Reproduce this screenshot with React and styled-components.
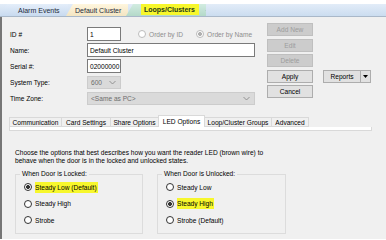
import React from "react"
import styled, { createGlobalStyle } from "styled-components"

const GlobalStyle = createGlobalStyle`
  html, body {
    margin: 0;
    padding: 0;
    background: #fff;
  }
  body {
    font-family: "Liberation Sans", Arial, sans-serif;
    font-size: 6.6px;
    color: #000;
  }
  #root {
    width: 386px;
    height: 240px;
    overflow: hidden;
  }
`

const docTabs = [
  { title: "Alarm Events", width: 68, pad: 18, bg: "linear-gradient(#e4eefa, #c8daef)" },
  { title: "Default Cluster", width: 62, pad: 9, bg: "linear-gradient(#fff6de, #f3e5c2)" },
  { title: "Loops/Clusters", width: 80, pad: 15, bg: "linear-gradient(#d2ece1, #b4d9c9)", active: true },
]

const pageTabs = [
  { title: "Communication", width: 53 },
  { title: "Card Settings", width: 50 },
  { title: "Share Options", width: 49 },
  { title: "LED Options", width: 47, active: true },
  { title: "Loop/Cluster Groups", width: 68 },
  { title: "Advanced", width: 38 },
]

const Chevron = () => (
  <svg width="7" height="5" viewBox="0 0 7 5">
    <polyline points="0.5,1 3.5,4 6.5,1" fill="none" stroke="#8a8a8a" strokeWidth="0.9" />
  </svg>
)

const Radio = ({ checked, disabled, children, mark }) => (
  <RadioRow disabled={disabled}>
    <RadioDot checked={checked} disabled={disabled} />
    {mark ? <Marker>{children}</Marker> : <span>{children}</span>}
  </RadioRow>
)

const App = () => {
  return (
    <>
      <GlobalStyle />
      <TabStrip>
        {docTabs.map((t, i) => (
          <DocTab key={i} w={t.width} pad={t.pad} bg={t.bg} active={t.active}>
            {t.active ? <TabMarker>{t.title}</TabMarker> : t.title}
            {t.active && (
              <CloseX width="7" height="7" viewBox="0 0 7 7">
                <path d="M1 1 L6 6 M6 1 L1 6" stroke="#8fa3ba" strokeWidth="1.2" />
              </CloseX>
            )}
          </DocTab>
        ))}
      </TabStrip>
      <Panel>
        <FormArea>
          <Fields>
            <Label>ID #</Label>
            <Inline>
              <TextBox w={34}>1</TextBox>
              <Options>
                <Radio disabled>Order by ID</Radio>
                <Radio disabled checked>Order by Name</Radio>
              </Options>
            </Inline>
            <Label>Name:</Label>
            <TextBox w={168}>Default Cluster</TextBox>
            <Label>Serial #:</Label>
            <TextBox w={34}>02000000</TextBox>
            <Label>System Type:</Label>
            <Combo w={34}>
              <span>600</span>
              <Chevron />
            </Combo>
            <Label>Time Zone:</Label>
            <Combo w={168}>
              <span>&lt;Same as PC&gt;</span>
              <Chevron />
            </Combo>
          </Fields>
          <Actions>
            <ActionButton disabled>Add New</ActionButton>
            <ActionButton disabled>Edit</ActionButton>
            <ActionButton disabled>Delete</ActionButton>
            <ActionButton>Apply</ActionButton>
            <SplitButton>
              <SplitMain>Reports</SplitMain>
              <SplitArrow>
                <svg width="5" height="3" viewBox="0 0 5 3">
                  <polygon points="0,0 5,0 2.5,3" fill="#000" />
                </svg>
              </SplitArrow>
            </SplitButton>
            <ActionButton>Cancel</ActionButton>
          </Actions>
        </FormArea>

        <TabBar>
          {pageTabs.map((t, i) => (
            <PageTab key={i} w={t.width} active={t.active}>
              {t.title}
            </PageTab>
          ))}
        </TabBar>
        <TabPage />

        <Description>
          Choose the options that best describes how you want the reader LED (brown wire) to
          <br />
          behave when the door is in the locked and unlocked states.
        </Description>

        <Groups>
          <GroupBox w={128}>
            <Legend>When Door is Locked:</Legend>
            <RadioList>
              <Radio checked mark>Steady Low (Default)</Radio>
              <Radio>Steady High</Radio>
              <Radio>Strobe</Radio>
            </RadioList>
          </GroupBox>
          <GroupBox w={129}>
            <Legend>When Door is Unlocked:</Legend>
            <RadioList>
              <Radio>Steady Low</Radio>
              <Radio checked mark>Steady High</Radio>
              <Radio>Strobe (Default)</Radio>
            </RadioList>
          </GroupBox>
        </Groups>
      </Panel>
    </>
  )
}

export default App

const TabStrip = styled.div`
  display: flex;
  align-items: stretch;
  height: 17px;
  padding-top: 4px;
  box-sizing: border-box;
  background: linear-gradient(#fff 0 4px, #e2ecf8 4px, #c9dbef 17px);
  border-bottom: 1px solid #a9b8c9;
`
const DocTab = styled.div`
  display: flex;
  align-items: center;
  width: ${({ w }) => w}px;
  padding-left: ${({ pad }) => pad}px;
  box-sizing: border-box;
  margin-right: -2px;
  background: ${({ bg }) => bg};
  clip-path: polygon(0 100%, 7px 0, 100% 0, 100% 100%);
  color: #1d2a3a;
  font-size: 7px;
  font-weight: ${({ active }) => (active ? "bold" : "normal")};
  white-space: nowrap;
`
const TabMarker = styled.span`
  background: #f7f72c;
  margin-top: -4px;
  padding: 4px 4px 2px 3px;
  color: #1f3a1a;
`
const CloseX = styled.svg`
  margin-left: 6px;
`
const Panel = styled.div`
  height: 222px;
  box-sizing: border-box;
  background: #f0f0f0;
  border-left: 2px solid #767676;
  display: flex;
  flex-direction: column;
`
const FormArea = styled.div`
  display: flex;
  padding-left: 8px;
`
const Fields = styled.div`
  display: grid;
  grid-template-columns: 77px 168px;
  grid-auto-rows: 14px;
  row-gap: 2px;
  align-items: center;
  padding-top: 10px;
`
const Label = styled.div`
  white-space: nowrap;
`
const Inline = styled.div`
  display: flex;
  align-items: center;
  height: 100%;
`
const TextBox = styled.div`
  width: ${({ w }) => w}px;
  height: 14px;
  box-sizing: border-box;
  border: 1px solid #7a7a7a;
  background: #fff;
  padding-left: 2px;
  display: flex;
  align-items: center;
  white-space: nowrap;
  overflow: hidden;
`
const Combo = styled.div`
  width: ${({ w }) => w}px;
  height: 13px;
  box-sizing: border-box;
  border: 1px solid #cccccc;
  background: #dadada;
  color: #6d6d6d;
  padding: 0 4px 0 3px;
  display: flex;
  align-items: center;
  justify-content: space-between;
`
const Options = styled.div`
  display: flex;
  gap: 13px;
  margin-left: 17px;
`
const RadioRow = styled.label`
  display: flex;
  align-items: center;
  gap: 3px;
  height: 10px;
  white-space: nowrap;
  color: ${({ disabled }) => (disabled ? "#8d8d8d" : "#000")};
`
const RadioDot = styled.span`
  width: 8px;
  height: 8px;
  box-sizing: border-box;
  border-radius: 50%;
  border: 1px solid ${({ disabled }) => (disabled ? "#bcbcbc" : "#333")};
  background: ${({ checked, disabled }) =>
    checked
      ? `radial-gradient(circle, ${disabled ? "#b0b0b0" : "#333"} 0 1.8px, #fff 2.2px)`
      : "#fff"};
  flex-shrink: 0;
`
const Marker = styled.span`
  background: #f7f72c;
  padding: 2px 1px 2px 0;
`
const Actions = styled.div`
  display: grid;
  grid-template-columns: 46px 48px;
  grid-auto-rows: 13px;
  row-gap: 2.5px;
  column-gap: 10px;
  margin-left: 12px;
  padding-top: 6px;
`
const ActionButton = styled.div`
  grid-column: 1;
  box-sizing: border-box;
  border: 1px solid ${({ disabled }) => (disabled ? "#bfbfbf" : "#adadad")};
  background: ${({ disabled }) => (disabled ? "#cccccc" : "#e1e1e1")};
  color: ${({ disabled }) => (disabled ? "#9c9c9c" : "#000")};
  display: flex;
  align-items: center;
  justify-content: center;
`
const SplitButton = styled.div`
  grid-column: 2;
  grid-row: 4;
  display: flex;
  box-sizing: border-box;
  border: 1px solid #adadad;
  background: #e1e1e1;
`
const SplitMain = styled.div`
  flex: 1;
  display: flex;
  align-items: center;
  justify-content: center;
  border-right: 1px solid #adadad;
`
const SplitArrow = styled.div`
  width: 9px;
  display: flex;
  align-items: center;
  justify-content: center;
`
const TabBar = styled.div`
  display: flex;
  align-items: flex-end;
  height: 12px;
  margin: 10px 0 0 8px;
`
const PageTab = styled.div`
  width: ${({ w }) => w}px;
  height: ${({ active }) => (active ? 12 : 10)}px;
  box-sizing: border-box;
  border: 1px solid #d9d9d9;
  border-bottom: ${({ active }) => (active ? "none" : "1px solid #d9d9d9")};
  margin-left: -1px;
  background: ${({ active }) => (active ? "#fff" : "#f0f0f0")};
  display: flex;
  align-items: center;
  justify-content: center;
  white-space: nowrap;
`
const TabPage = styled.div`
  width: 361px;
  height: 3px;
  margin-left: 7px;
  background: #fff;
  border: 1px solid #d9d9d9;
  border-top: none;
  box-sizing: content-box;
`
const Description = styled.div`
  margin: 18px 0 0 13px;
  line-height: 8px;
  white-space: nowrap;
`
const Groups = styled.div`
  display: flex;
  gap: 14px;
  margin: 5px 0 0 13px;
`
const GroupBox = styled.fieldset`
  width: ${({ w }) => w}px;
  height: 64px;
  box-sizing: border-box;
  margin: 0;
  padding: 0 0 0 8px;
  border: 1px solid #dcdcdc;
`
const Legend = styled.legend`
  padding: 0 2px;
  margin-left: -4px;
  line-height: 8px;
`
const RadioList = styled.div`
  display: flex;
  flex-direction: column;
  gap: 6.5px;
  padding-top: 4px;
`
